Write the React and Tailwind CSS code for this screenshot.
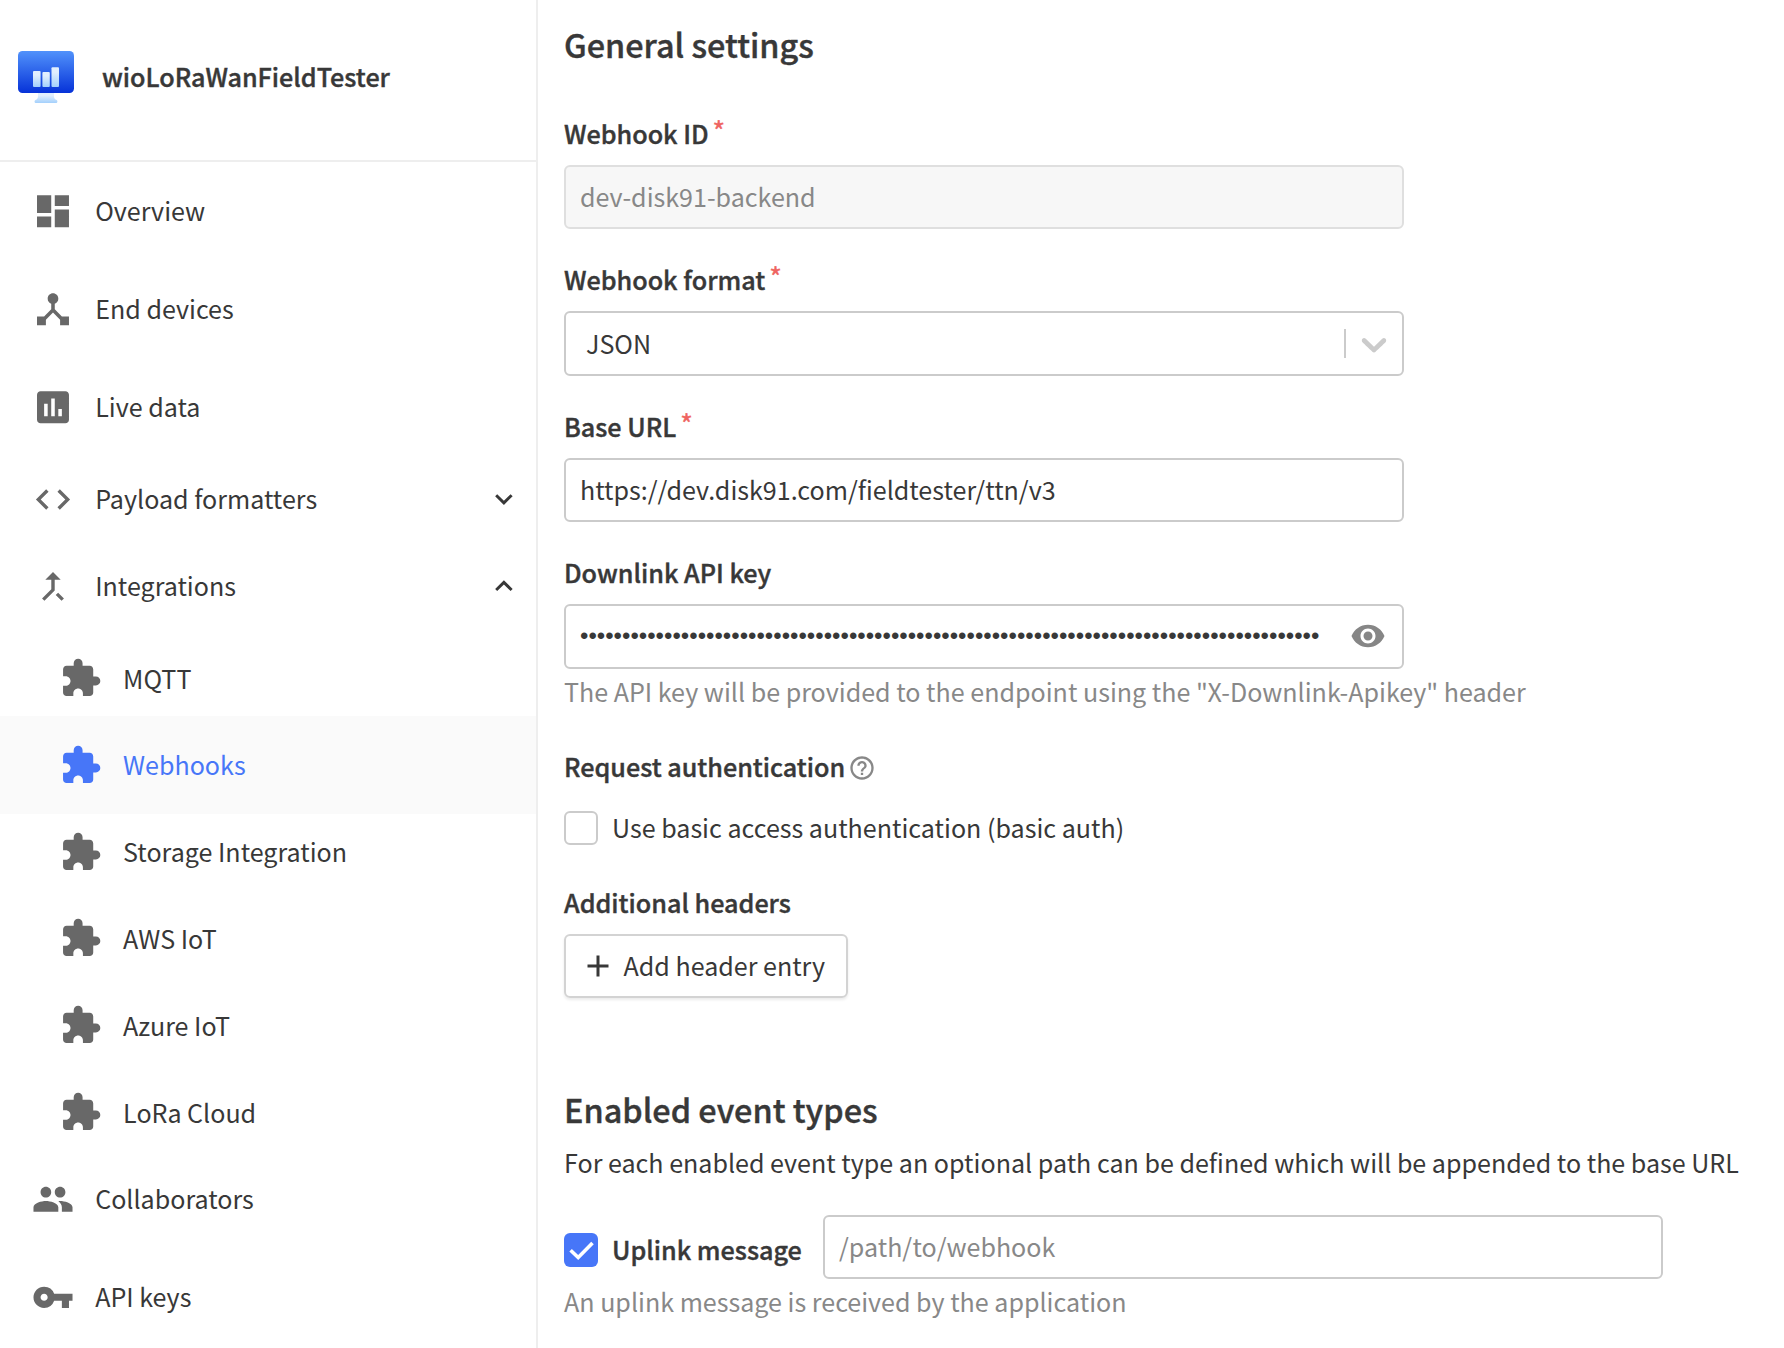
import React from "react";
import {
  MdDashboard, MdDeviceHub, MdInsertChart, MdCode, MdCallMerge, MdExtension,
  MdGroup, MdVpnKey, MdExpandMore, MdExpandLess, MdVisibility, MdHelpOutline, MdAdd,
} from "react-icons/md";

const semibold = "font-medium text-[25.17px] [-webkit-text-stroke:0.4px_currentColor]";
const heading = "font-medium text-[32.4px] leading-[48px] [-webkit-text-stroke:0.4px_currentColor]";

function Logo() {
  return (
    <svg className="h-[52px] w-[56px] shrink-0" viewBox="0 0 56 52">
      <defs>
        <linearGradient id="screen" x1="0" y1="0" x2="0" y2="1">
          <stop offset="0" stopColor="#5192fb" />
          <stop offset="1" stopColor="#0632d8" />
        </linearGradient>
        <linearGradient id="pale" x1="0" y1="0" x2="0" y2="1">
          <stop offset="0.25" stopColor="#e2effe" />
          <stop offset="1" stopColor="#a3d0fc" />
        </linearGradient>
      </defs>
      <path d="M20 42h16v3.5c0 1.6 .8 2.8 2 3.2 2.1.8 1.8 3.3-.3 3.3H18.3c-2.1 0-2.4-2.5-.3-3.3 1.2-.4 2-1.6 2-3.2z" fill="url(#pale)" />
      <rect width="56" height="42" rx="4.5" fill="url(#screen)" />
      <rect x="15" y="20" width="7.6" height="16" rx="1" fill="url(#pale)" />
      <rect x="24.4" y="21" width="7.4" height="15" rx="1" fill="url(#pale)" />
      <rect x="33.5" y="16.3" width="7.5" height="19.7" rx="1" fill="url(#pale)" />
    </svg>
  );
}

function NavItem({ icon: Icon, label }) {
  return (
    <div className="flex h-[98px] items-center pl-[31.6px]">
      <Icon className="size-[42.6px] shrink-0 translate-x-[-0.3px] text-[#686868]" />
      <span className="ml-[21px] pb-[2px]">{label}</span>
    </div>
  );
}

function NavGroup({ icon: Icon, label, chevron: Chevron }) {
  return (
    <div className="flex h-[87px] items-center pl-8 pr-[15px]">
      <Icon className="size-[41px] shrink-0 translate-x-[0.5px] text-[#686868]" />
      <span className="ml-[22.2px] grow pb-[3px]">{label}</span>
      <Chevron className="size-[35px] shrink-0 translate-x-[0.4px] -translate-y-[0.4px]" />
    </div>
  );
}

function SubItem({ label, active }) {
  return (
    <div
      className={
        active
          ? "-my-[5.6px] flex h-[98px] items-center bg-[#fafafa] pl-[59px] text-[#4776f8]"
          : "flex h-[86.8px] items-center pl-[59px]"
      }
    >
      <MdExtension
        className={
          active
            ? "size-[42.6px] shrink-0 translate-x-[0.5px]"
            : "size-[42.6px] shrink-0 translate-x-[0.5px] text-[#686868]"
        }
      />
      <span className={active ? "ml-[21.5px] pb-[3px]" : "ml-[21.5px] pb-px"}>{label}</span>
    </div>
  );
}

function Label({ children, required }) {
  return (
    <div className={`flex h-10 items-center ${semibold}`}>
      {children}
      {required && <span className="relative -top-[2px] ml-1 text-[27px] font-normal text-[#ef6461]">*</span>}
    </div>
  );
}

export default function App() {
  return (
    <div className="flex h-[1348px] w-[1784px] overflow-hidden whitespace-nowrap bg-white font-['Noto_Sans_CJK_SC','Source_Sans_Pro',sans-serif] text-[25.07px] leading-10 text-[#383838]">
      <aside className="w-[538px] shrink-0 border-r-2 border-[#eee]">
        <div className="flex h-[162px] items-center border-b-2 border-[#eee] pb-[6px] pl-[18px]">
          <Logo />
          <span className={`ml-[28px] pb-[2px] ${semibold}`}>wioLoRaWanFieldTester</span>
        </div>
        <nav>
          <NavItem icon={MdDashboard} label="Overview" />
          <NavItem icon={MdDeviceHub} label="End devices" />
          <NavItem icon={MdInsertChart} label="Live data" />
          <NavGroup icon={MdCode} label="Payload formatters" chevron={MdExpandMore} />
          <NavGroup icon={MdCallMerge} label="Integrations" chevron={MdExpandLess} />
          <div className="mt-[4.8px] -mb-[5.6px]">
            <SubItem label="MQTT" />
            <SubItem label="Webhooks" active />
            <SubItem label="Storage Integration" />
            <SubItem label="AWS IoT" />
            <SubItem label="Azure IoT" />
            <SubItem label="LoRa Cloud" />
          </div>
          <NavItem icon={MdGroup} label="Collaborators" />
          <NavItem icon={MdVpnKey} label="API keys" />
        </nav>
      </aside>

      <main className="grow pl-[26px] pt-5">
        <h1 className={`mb-[45px] ${heading}`}>General settings</h1>

        <Label required>Webhook ID</Label>
        <div className="mt-3 mb-[30px] flex h-16 w-[840px] items-center rounded-md border-2 border-[#dfdfdf] bg-[#f7f7f7] px-[14px] pb-[3px] text-[#888]">
          dev-disk91-backend
        </div>

        <Label required>Webhook format</Label>
        <div className="mt-3 mb-[30px] flex h-[65px] w-[840px] items-center rounded-md border-2 border-[#cbcbcb] pl-5 pr-[7px]">
          <span className="grow pb-[2px]">JSON</span>
          <span className="h-[29px] w-0.5 bg-[#cbcbcb]" />
          <svg viewBox="0 0 20 20" className="ml-[7px] size-[42px] text-[#cbcbcb]" fill="currentColor">
            <path d="M4.516 7.548c0.436-0.446 1.043-0.481 1.576 0l3.908 3.747 3.908-3.747c0.533-0.481 1.141-0.446 1.574 0 0.436 0.445 0.408 1.197 0 1.615-0.406 0.418-4.695 4.502-4.695 4.502-0.217 0.223-0.502 0.335-0.787 0.335s-0.57-0.112-0.789-0.335c0 0-4.287-4.084-4.695-4.502s-0.436-1.17 0-1.615z" />
          </svg>
        </div>

        <Label required>Base URL</Label>
        <div className="mt-3 mb-[30px] flex h-16 w-[840px] items-center rounded-md border-2 border-[#cbcbcb] px-[14px] pb-[3px]">
          https://dev.disk91.com/fieldtester/ttn/v3
        </div>

        <Label>Downlink API key</Label>
        <div className="mt-3 flex h-[65px] w-[840px] items-center justify-between rounded-md border-2 border-[#cbcbcb] pb-[2px] pl-[14px] pr-4">
          <span className="font-['Liberation_Sans',sans-serif] text-[24px]">{"•".repeat(88)}</span>
          <MdVisibility className="size-9 text-[#868686]" />
        </div>
        <p className="mt-0.5 text-[#888]">The API key will be provided to the endpoint using the "X-Downlink-Apikey" header</p>

        <div className={`mt-[35px] flex h-10 items-center ${semibold}`}>
          Request authentication
          <MdHelpOutline className="ml-[3px] mt-[3px] size-7 text-[#888]" />
        </div>
        <div className="mt-[25px] flex h-[34px] items-center">
          <span className="size-[34px] rounded-md border-2 border-[#cbcbcb]" />
          <span className="ml-[14px] pb-[3px]">Use basic access authentication (basic auth)</span>
        </div>

        <div className={`mt-[37px] h-10 ${semibold}`}>Additional headers</div>
        <button className="mt-3 flex h-16 w-[284px] items-center rounded-md border-2 border-[#d3d3d3] pl-[14px] shadow-[0_2px_3px_rgba(0,0,0,0.08)]">
          <MdAdd className="size-9" />
          <span className="ml-[7.5px] pb-[3px]">Add header entry</span>
        </button>

        <h2 className={`mt-[87px] ${heading}`}>Enabled event types</h2>
        <p className="mt-[9px]">For each enabled event type an optional path can be defined which will be appended to the base URL</p>

        <div className="mt-[33px] flex h-16 items-center">
          <span className="mt-[6px] size-[34px] rounded-md bg-[#4776f8] text-white">
            <svg viewBox="0 0 34 34" className="size-[34px]" fill="none" stroke="currentColor" strokeWidth="3.6">
              <path d="M6.6 17.2L14.2 24.5L28.5 10" />
            </svg>
          </span>
          <span className={`ml-[14px] mt-[3px] w-[211px] ${semibold}`}>Uplink message</span>
          <div className="flex h-16 w-[840px] items-center rounded-md border-2 border-[#cbcbcb] px-[14px] pb-[3px] text-[#888]">
            /path/to/webhook
          </div>
        </div>
        <p className="mt-0.5 text-[#888]">An uplink message is received by the application</p>
      </main>
    </div>
  );
}
